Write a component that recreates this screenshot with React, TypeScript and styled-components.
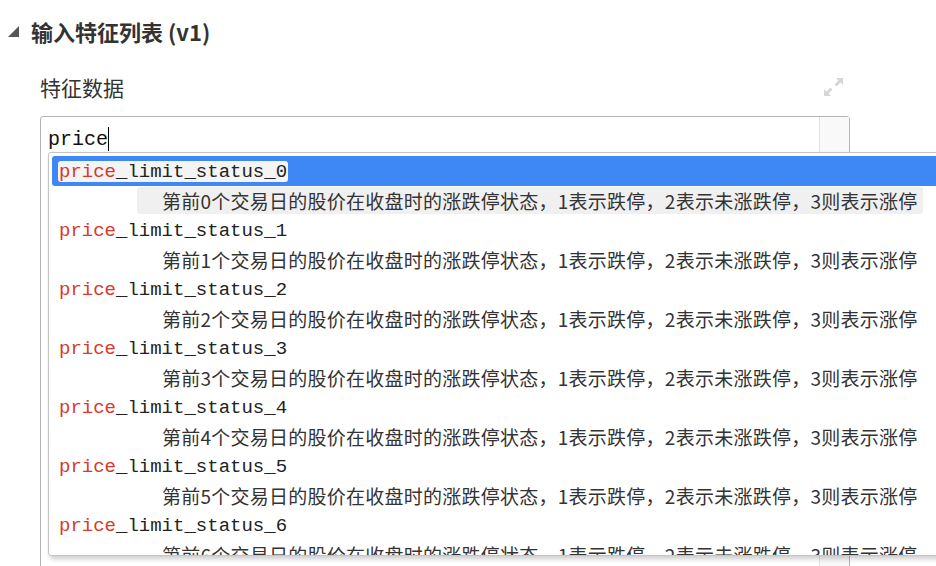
import React from 'react';
import styled, { createGlobalStyle } from 'styled-components';

const GlobalStyle = createGlobalStyle`
  html, body {
    margin: 0;
    padding: 0;
    overflow: hidden;
    background: #fff;
  }
  body {
    font-family: "Noto Sans CJK SC", "Noto Sans", sans-serif;
    color: #333;
  }
`;

const Page = styled.div`
  width: 936px;
  height: 566px;
  overflow: hidden;
`;

const SectionHeader = styled.div`
  height: 62px;
  padding-bottom: 4px;
  display: flex;
  align-items: center;
  gap: 12px;
  padding-left: 8px;
`;

const SectionTitle = styled.h2`
  margin: 0;
  font-size: 22px;
  font-weight: 700;
  color: #333;
  line-height: 1;
`;

const Field = styled.div`
  width: 810px;
  margin-left: 40px;
`;

const LabelRow = styled.div`
  height: 42px;
  padding-bottom: 4px;
  margin-bottom: 4px;
  display: flex;
  align-items: center;
  justify-content: space-between;
  padding-right: 7px;
`;

const Label = styled.span`
  font-size: 21px;
  color: #333;
`;

const Editor = styled.div`
  position: relative;
  height: 480px;
  border: 1px solid #b4b4b4;
  border-radius: 3px;
  display: flex;
`;

const CodeArea = styled.div`
  flex: 1;
  padding: 8px 7px 0;
`;

const CodeLine = styled.div`
  font-family: "Liberation Mono", monospace;
  font-size: 20px;
  line-height: 30px;
  color: #111;
  display: flex;
  align-items: center;
`;

const Cursor = styled.span`
  display: inline-block;
  width: 1px;
  height: 24px;
  margin-top: -2px;
  background: #000;
`;

const Gutter = styled.div`
  width: 29px;
  background: #f9f9f9;
  border-left: 1px solid #e2e2e2;
`;

const HintList = styled.ul`
  position: absolute;
  top: 35px;
  left: 7px;
  width: 920px;
  height: 396px;
  margin: 0;
  padding: 3px;
  list-style: none;
  overflow: hidden;
  background: #fff;
  border: 1px solid #c4c4c4;
  border-radius: 3px;
  box-shadow: 2px 3px 5px rgba(0, 0, 0, 0.2);
`;

const HintItem = styled.li``;

const NameRow = styled.div<{ active?: boolean }>`
  height: 30px;
  display: flex;
  align-items: center;
  padding-left: 6px;
  border-radius: 3px;
  background: ${p => (p.active ? '#3d88f4' : 'transparent')};
`;

const Name = styled.span<{ active?: boolean }>`
  font-family: "Liberation Mono", monospace;
  font-size: 19px;
  line-height: 21px;
  height: 21px;
  padding: 2px 1px 0;
  box-sizing: border-box;
  display: inline-flex;
  align-items: center;
  color: #222;
  border-radius: 3px;
  background: ${p => (p.active ? '#f4f4f4' : 'transparent')};
`;

const Match = styled.span`
  color: #d9392a;
`;

const DescRow = styled.div`
  height: 29px;
  display: flex;
  align-items: center;
`;

const Desc = styled.span<{ active?: boolean }>`
  margin-left: 85px;
  padding: 0 6px 0 25px;
  height: 27px;
  line-height: 27px;
  font-size: 19px;
  letter-spacing: 0.25px;
  color: #333;
  white-space: nowrap;
  border-radius: 3px;
  background: ${p => (p.active ? '#f0f0f0' : 'transparent')};
`;

const Triangle = () => (
  <svg width="11" height="11" viewBox="0 0 11 11">
    <polygon points="11,0 11,11 0,11" fill="#555" />
  </svg>
);

const ExpandIcon = () => (
  <svg width="19" height="18" viewBox="0 0 19 18">
    <g fill="#d6d6d6">
      <polygon points="12,0 19,0 19,7 16.5,4.5 12.5,8.5 10.5,6.5 14.5,2.5" />
      <polygon points="7,18 0,18 0,11 2.5,13.5 6.5,9.5 8.5,11.5 4.5,15.5" />
    </g>
  </svg>
);

const query = 'price';
const hints = [0, 1, 2, 3, 4, 5, 6, 7].map(i => ({
  name: `price_limit_status_${i}`,
  desc: `第前${i}个交易日的股价在收盘时的涨跌停状态，1表示跌停，2表示未涨跌停，3则表示涨停`,
}));

export default function App() {
  return (
    <Page>
      <GlobalStyle />
      <SectionHeader>
        <Triangle />
        <SectionTitle>输入特征列表 (v1)</SectionTitle>
      </SectionHeader>
      <Field>
        <LabelRow>
          <Label>特征数据</Label>
          <ExpandIcon />
        </LabelRow>
        <Editor>
          <CodeArea>
            <CodeLine>
              {query}
              <Cursor />
            </CodeLine>
          </CodeArea>
          <Gutter />
          <HintList>
            {hints.map((h, i) => (
              <HintItem key={h.name}>
                <NameRow active={i === 0}>
                  <Name active={i === 0}>
                    <Match>{h.name.slice(0, query.length)}</Match>
                    {h.name.slice(query.length)}
                  </Name>
                </NameRow>
                <DescRow>
                  <Desc active={i === 0}>{h.desc}</Desc>
                </DescRow>
              </HintItem>
            ))}
          </HintList>
        </Editor>
      </Field>
    </Page>
  );
}
